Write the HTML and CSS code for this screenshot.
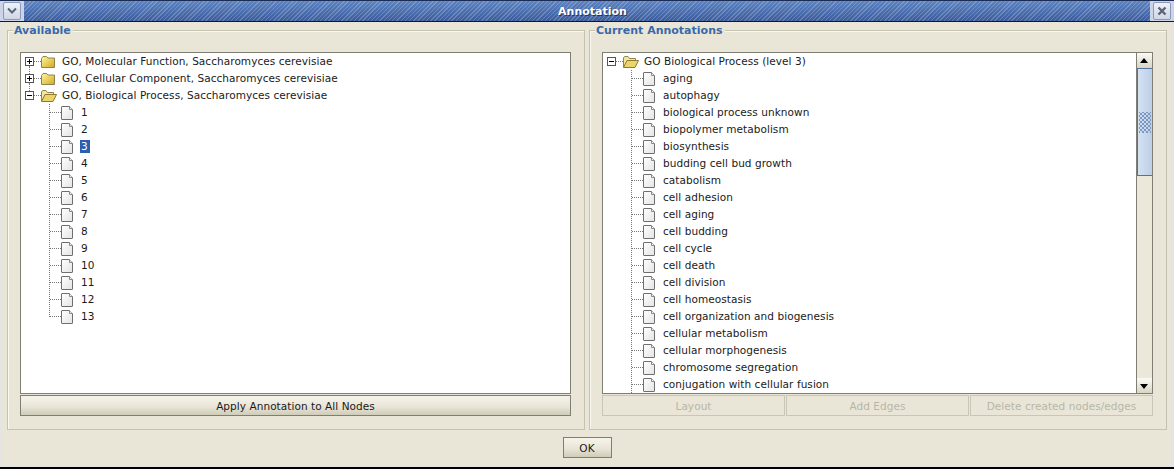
FILE: index.html
```html
<!DOCTYPE html>
<html lang="en">
<head>
    <meta charset="UTF-8">
    <title>Annotation</title>
    <link rel="stylesheet" href="styles.css">
</head>
<body>
<svg class="sprites" width="0" height="0">
    <defs>
        <linearGradient id="gold" x1="0" y1="0" x2="1" y2="1">
            <stop offset="0" stop-color="#fff6a0"/>
            <stop offset="1" stop-color="#d2a81e"/>
        </linearGradient>
        <linearGradient id="paper" x1="0" y1="0" x2="1" y2="1">
            <stop offset="0" stop-color="#fff"/>
            <stop offset="1" stop-color="#e4e4e4"/>
        </linearGradient>
    </defs>
    <symbol id="doc" viewBox="0 0 13 16">
        <path d="M.5 2 Q.5 1.5 1 1.5 H8.5 L11.5 4.5 V14 Q11.5 14.5 11 14.5 H1 Q.5 14.5 .5 14 Z" fill="url(#paper)" stroke="#6e6e6e"/>
        <path d="M8.5 1.5 V4.5 H11.5" fill="#f2f2f2" stroke="#8a8a8a"/>
    </symbol>
    <symbol id="folder" viewBox="0 0 14 13">
        <path d="M.5 3.5 L2 1.5 H5.5 L7 3 H13.5 V12.5 H.5 Z" fill="url(#gold)" stroke="#8f8450"/>
    </symbol>
    <symbol id="folder-open" viewBox="0 0 16 13">
        <path d="M.5 12 V2.5 L2 1.5 H5 L6.5 3.5 H12.5 V5.5" fill="#f3e6a0" stroke="#8f8450"/>
        <path d="M.5 12.5 L4 5.5 H15.5 L12 12.5 Z" fill="#ecd36a" stroke="#8f7a30"/>
    </symbol>
    <symbol id="plus" viewBox="0 0 9 9">
        <rect x=".5" y=".5" width="8" height="8" fill="#fff" stroke="#555"/>
        <path d="M2 4.5 H7 M4.5 2 V7" stroke="#000"/>
    </symbol>
    <symbol id="minus" viewBox="0 0 9 9">
        <rect x=".5" y=".5" width="8" height="8" fill="#fff" stroke="#555"/>
        <path d="M2 4.5 H7" stroke="#000"/>
    </symbol>
</svg>

<div class="window">
    <div class="titlebar">
        <div class="win-slot">
            <div class="win-btn">
                <svg width="10" height="8" viewBox="0 0 10 8"><path d="M1 1.5 L5 5.5 L9 1.5" fill="none" stroke="#5a6478" stroke-width="2"/></svg>
            </div>
        </div>
        <div class="title-text">Annotation</div>
        <div class="win-slot">
            <div class="win-btn">
                <svg width="10" height="10" viewBox="0 0 10 10"><path d="M1.5 1.5 L8.5 8.5 M8.5 1.5 L1.5 8.5" stroke="#5a6478" stroke-width="2.4"/></svg>
            </div>
        </div>
    </div>

    <div class="panels">
        <div class="panel">
            <span class="panel-title">Available</span>
            <div class="tree">
                <div class="tree-body">
                    <div class="row root has-next"><svg class="toggle"><use href="#plus"/></svg><i class="stub"></i><svg class="ico-folder"><use href="#folder"/></svg><span class="label">GO, Molecular Function, Saccharomyces cerevisiae</span></div>
                    <div class="row root has-next"><svg class="toggle"><use href="#plus"/></svg><i class="stub"></i><svg class="ico-folder"><use href="#folder"/></svg><span class="label">GO, Cellular Component, Saccharomyces cerevisiae</span></div>
                    <div class="row root"><svg class="toggle"><use href="#minus"/></svg><i class="stub"></i><svg class="ico-open"><use href="#folder-open"/></svg><span class="label">GO, Biological Process, Saccharomyces cerevisiae</span></div>
                    <div class="children">
                        <div class="row leaf"><i class="branch"></i><svg class="ico-doc"><use href="#doc"/></svg><span class="label">1</span></div>
                        <div class="row leaf"><i class="branch"></i><svg class="ico-doc"><use href="#doc"/></svg><span class="label">2</span></div>
                        <div class="row leaf"><i class="branch"></i><svg class="ico-doc"><use href="#doc"/></svg><span class="label selected">3</span></div>
                        <div class="row leaf"><i class="branch"></i><svg class="ico-doc"><use href="#doc"/></svg><span class="label">4</span></div>
                        <div class="row leaf"><i class="branch"></i><svg class="ico-doc"><use href="#doc"/></svg><span class="label">5</span></div>
                        <div class="row leaf"><i class="branch"></i><svg class="ico-doc"><use href="#doc"/></svg><span class="label">6</span></div>
                        <div class="row leaf"><i class="branch"></i><svg class="ico-doc"><use href="#doc"/></svg><span class="label">7</span></div>
                        <div class="row leaf"><i class="branch"></i><svg class="ico-doc"><use href="#doc"/></svg><span class="label">8</span></div>
                        <div class="row leaf"><i class="branch"></i><svg class="ico-doc"><use href="#doc"/></svg><span class="label">9</span></div>
                        <div class="row leaf"><i class="branch"></i><svg class="ico-doc"><use href="#doc"/></svg><span class="label">10</span></div>
                        <div class="row leaf"><i class="branch"></i><svg class="ico-doc"><use href="#doc"/></svg><span class="label">11</span></div>
                        <div class="row leaf"><i class="branch"></i><svg class="ico-doc"><use href="#doc"/></svg><span class="label">12</span></div>
                        <div class="row leaf last"><i class="branch"></i><svg class="ico-doc"><use href="#doc"/></svg><span class="label">13</span></div>
                    </div>
                </div>
            </div>
            <div class="actions">
                <button type="button" class="btn">Apply Annotation to All Nodes</button>
            </div>
        </div>

        <div class="panel">
            <span class="panel-title">Current Annotations</span>
            <div class="tree">
                <div class="tree-body">
                    <div class="row root"><svg class="toggle"><use href="#minus"/></svg><i class="stub"></i><svg class="ico-open"><use href="#folder-open"/></svg><span class="label">GO Biological Process (level 3)</span></div>
                    <div class="children">
                        <div class="row leaf"><i class="branch"></i><svg class="ico-doc"><use href="#doc"/></svg><span class="label">aging</span></div>
                        <div class="row leaf"><i class="branch"></i><svg class="ico-doc"><use href="#doc"/></svg><span class="label">autophagy</span></div>
                        <div class="row leaf"><i class="branch"></i><svg class="ico-doc"><use href="#doc"/></svg><span class="label">biological process unknown</span></div>
                        <div class="row leaf"><i class="branch"></i><svg class="ico-doc"><use href="#doc"/></svg><span class="label">biopolymer metabolism</span></div>
                        <div class="row leaf"><i class="branch"></i><svg class="ico-doc"><use href="#doc"/></svg><span class="label">biosynthesis</span></div>
                        <div class="row leaf"><i class="branch"></i><svg class="ico-doc"><use href="#doc"/></svg><span class="label">budding cell bud growth</span></div>
                        <div class="row leaf"><i class="branch"></i><svg class="ico-doc"><use href="#doc"/></svg><span class="label">catabolism</span></div>
                        <div class="row leaf"><i class="branch"></i><svg class="ico-doc"><use href="#doc"/></svg><span class="label">cell adhesion</span></div>
                        <div class="row leaf"><i class="branch"></i><svg class="ico-doc"><use href="#doc"/></svg><span class="label">cell aging</span></div>
                        <div class="row leaf"><i class="branch"></i><svg class="ico-doc"><use href="#doc"/></svg><span class="label">cell budding</span></div>
                        <div class="row leaf"><i class="branch"></i><svg class="ico-doc"><use href="#doc"/></svg><span class="label">cell cycle</span></div>
                        <div class="row leaf"><i class="branch"></i><svg class="ico-doc"><use href="#doc"/></svg><span class="label">cell death</span></div>
                        <div class="row leaf"><i class="branch"></i><svg class="ico-doc"><use href="#doc"/></svg><span class="label">cell division</span></div>
                        <div class="row leaf"><i class="branch"></i><svg class="ico-doc"><use href="#doc"/></svg><span class="label">cell homeostasis</span></div>
                        <div class="row leaf"><i class="branch"></i><svg class="ico-doc"><use href="#doc"/></svg><span class="label">cell organization and biogenesis</span></div>
                        <div class="row leaf"><i class="branch"></i><svg class="ico-doc"><use href="#doc"/></svg><span class="label">cellular metabolism</span></div>
                        <div class="row leaf"><i class="branch"></i><svg class="ico-doc"><use href="#doc"/></svg><span class="label">cellular morphogenesis</span></div>
                        <div class="row leaf"><i class="branch"></i><svg class="ico-doc"><use href="#doc"/></svg><span class="label">chromosome segregation</span></div>
                        <div class="row leaf"><i class="branch"></i><svg class="ico-doc"><use href="#doc"/></svg><span class="label">conjugation with cellular fusion</span></div>
                    </div>
                </div>
                <div class="scrollbar">
                    <div class="arrow up"></div>
                    <div class="thumb"><div class="grip"></div></div>
                    <div class="track"></div>
                    <div class="arrow down"></div>
                </div>
            </div>
            <div class="actions">
                <button type="button" class="btn" disabled>Layout</button>
                <button type="button" class="btn" disabled>Add Edges</button>
                <button type="button" class="btn" disabled>Delete created nodes/edges</button>
            </div>
        </div>
    </div>

    <div class="footer">
        <button type="button" class="btn ok">OK</button>
    </div>
</div>
</body>
</html>
```

FILE: styles.css
```css
html, body {
    margin: 0;
    padding: 0;
    overflow: hidden;
}

body {
    width: 1174px;
    height: 469px;
    font-family: "DejaVu Sans", sans-serif;
    font-size: 10.5px;
    color: #1a1a1a;
    background: #000;
}

.sprites {
    position: absolute;
}

.window {
    box-sizing: border-box;
    width: 1174px;
    height: 467px;
    display: flex;
    flex-direction: column;
    background: #e9e6d8;
    border-left: 2px solid #e4e4e4;
    border-right: 2px solid #e4e4e4;
    border-bottom: 1px solid #e4e4e4;
}

.titlebar {
    height: 22px;
    margin: 0 -2px;
    display: flex;
    align-items: center;
    justify-content: space-between;
    box-sizing: border-box;
    border-top: 1px solid #1d2c52;
    border-bottom: 1px solid #10182e;
    background:
        repeating-linear-gradient(135deg, rgba(255,255,255,0.2) 0 1px, rgba(255,255,255,0) 1px 3px),
        linear-gradient(#5c83c2, #3c5c9c);
}

.title-text {
    margin-left: 11px;
    color: #fff;
    font-weight: bold;
    font-size: 11px;
    text-shadow: 1px 1px 0 #22345e;
}

.win-slot {
    width: 24px;
    height: 100%;
    display: flex;
    align-items: center;
    justify-content: center;
    background: #ccd4e8;
}

.win-btn {
    box-sizing: border-box;
    width: 18px;
    height: 18px;
    display: flex;
    align-items: center;
    justify-content: center;
    background: linear-gradient(#eef1f8, #cfd6e6);
    border: 1px solid #8c99b8;
    border-radius: 2px;
}

.panels {
    display: flex;
    gap: 4px;
    padding: 8px 5px 0 5px;
}

.panel {
    position: relative;
    box-sizing: border-box;
    width: 578px;
    height: 400px;
    padding: 21px 13px 0 12px;
    border: 1px solid #c4c3b2;
    box-shadow: inset 1px 1px 0 #f8f7f0;
    display: flex;
    flex-direction: column;
}

.panel-title {
    position: absolute;
    top: -7px;
    left: 5px;
    padding: 0 2px 0 1px;
    background: #e9e6d8;
    color: #3a69aa;
    font-weight: bold;
    font-size: 11px;
    line-height: 14px;
}

.tree {
    box-sizing: border-box;
    height: 342px;
    background: #fff;
    border: 1px solid #7f7e74;
    overflow: hidden;
    display: flex;
}

.tree-body {
    flex: 1;
    overflow: hidden;
}

.row {
    position: relative;
    height: 17px;
    display: flex;
    align-items: center;
    white-space: nowrap;
    letter-spacing: 0.06px;
}

.root {
    padding-left: 4px;
}

.toggle {
    width: 9px;
    height: 9px;
    flex: none;
}

.stub {
    width: 7px;
    border-top: 1px dotted #777;
    flex: none;
}

.ico-folder {
    width: 14px;
    height: 13px;
    margin-right: 6px;
    flex: none;
}

.ico-open {
    width: 16px;
    height: 13px;
    margin-right: 4px;
    flex: none;
}

/* dotted line joining one collapsed root to the next */
.has-next::before {
    content: "";
    position: absolute;
    left: 8px;
    top: 13px;
    height: 8px;
    border-left: 1px dotted #777;
}

.children {
    margin-left: 28px;
    border-left: 1px dotted #777;
}

/* hides the rest of the line below the last branch */
.last::before {
    content: "";
    position: absolute;
    left: -1px;
    top: 9px;
    bottom: 0;
    width: 1px;
    background: #fff;
}

.branch {
    width: 11px;
    border-top: 1px dotted #777;
    flex: none;
}

.ico-doc {
    width: 13px;
    height: 16px;
    margin-right: 6px;
    flex: none;
}

.label {
    padding: 0 2px 0 1px;
    line-height: 13px;
}

.selected {
    background: #2c5fb0;
    color: #fff;
}

.scrollbar {
    width: 15px;
    flex: none;
    display: flex;
    flex-direction: column;
    border-left: 1px solid #7f7e74;
    background: #e9e6d8;
}

.arrow {
    height: 15px;
    flex: none;
    position: relative;
    background: linear-gradient(#fbfaf4, #d8d5c4);
}

.arrow::after {
    content: "";
    position: absolute;
    left: 3px;
    width: 0;
    height: 0;
    border-left: 4px solid transparent;
    border-right: 4px solid transparent;
}

.up::after {
    top: 5px;
    border-bottom: 5px solid #000;
}

.down::after {
    top: 6px;
    border-top: 5px solid #000;
}

.thumb {
    box-sizing: border-box;
    height: 108px;
    flex: none;
    display: flex;
    align-items: center;
    justify-content: center;
    background: linear-gradient(90deg, #d4e1f2, #bccfe8);
    border-top: 1px solid #4f72a8;
    border-bottom: 1px solid #4f72a8;
    border-left: 1px solid #4f72a8;
}

.grip {
    width: 12px;
    height: 21px;
    background-image:
        radial-gradient(#7d98c0 0.8px, transparent 1px),
        radial-gradient(#7d98c0 0.8px, transparent 1px);
    background-size: 4px 4px;
    background-position: 0 0, 2px 2px;
}

.track {
    flex: 1;
    background: #ebe8da;
}

.actions {
    display: flex;
    gap: 1px;
    margin-top: 1px;
}

.btn {
    flex: 1 1 0;
    height: 21px;
    padding: 0;
    font-family: inherit;
    font-size: 10.5px;
    letter-spacing: 0.06px;
    color: #1a1a1a;
    background: linear-gradient(#f6f4ea, #e9e6d8 55%, #cfccba);
    border: 1px solid #7f7e74;
}

.btn:disabled {
    color: #b8b6a6;
    background: #e9e6d8;
    border-color: #c8c6b6;
}

.footer {
    display: flex;
    justify-content: center;
    padding-top: 7px;
}

.ok {
    flex: none;
    width: 49px;
}
```
